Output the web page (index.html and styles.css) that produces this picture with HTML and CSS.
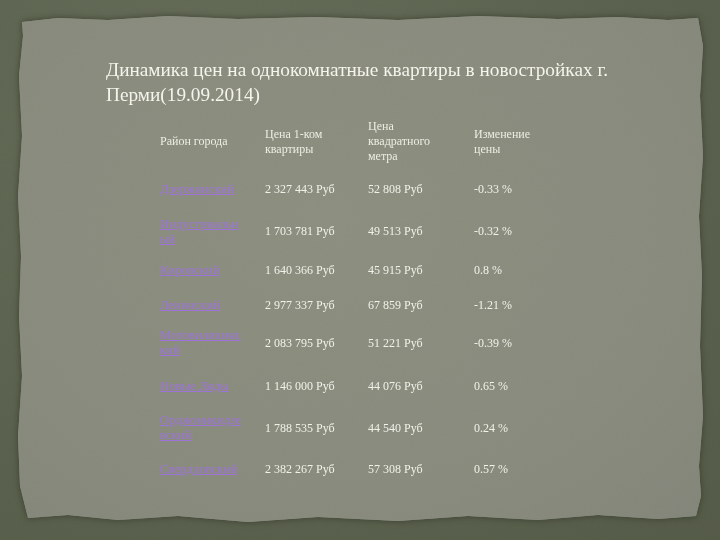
FILE: index.html
```html
<!DOCTYPE html>
<html lang="ru">
<head>
<meta charset="utf-8">
<title>Динамика цен</title>
<link rel="stylesheet" href="styles.css">
</head>
<body>
<div class="frame">
  <div class="paper">
    <h1 class="title">Динамика цен на однокомнатные квартиры в новостройках г.<br>Перми(19.09.2014)</h1>
    <table class="prices">
      <tr class="head">
        <td>Район города</td>
        <td>Цена 1-ком квартиры</td>
        <td>Цена квадратного метра</td>
        <td>Изменение цены</td>
      </tr>
      <tr class="r1">
        <td><a href="#">Дзержинский</a></td>
        <td>2 327 443 Руб</td>
        <td>52 808 Руб</td>
        <td>-0.33 %</td>
      </tr>
      <tr class="r2">
        <td><a href="#">Индустриальный</a></td>
        <td>1 703 781 Руб</td>
        <td>49 513 Руб</td>
        <td>-0.32 %</td>
      </tr>
      <tr class="r3">
        <td><a href="#">Кировский</a></td>
        <td>1 640 366 Руб</td>
        <td>45 915 Руб</td>
        <td>0.8 %</td>
      </tr>
      <tr class="r4">
        <td><a href="#">Ленинский</a></td>
        <td>2 977 337 Руб</td>
        <td>67 859 Руб</td>
        <td>-1.21 %</td>
      </tr>
      <tr class="r5">
        <td><a href="#">Мотовилихинский</a></td>
        <td>2 083 795 Руб</td>
        <td>51 221 Руб</td>
        <td>-0.39 %</td>
      </tr>
      <tr class="r6">
        <td><a href="#">Новые Ляды</a></td>
        <td>1 146 000 Руб</td>
        <td>44 076 Руб</td>
        <td>0.65 %</td>
      </tr>
      <tr class="r7">
        <td><a href="#">Орджоникидзевский</a></td>
        <td>1 788 535 Руб</td>
        <td>44 540 Руб</td>
        <td>0.24 %</td>
      </tr>
      <tr class="r8">
        <td><a href="#">Свердловский</a></td>
        <td>2 382 267 Руб</td>
        <td>57 308 Руб</td>
        <td>0.57 %</td>
      </tr>
    </table>
  </div>
</div>
<svg class="noise" width="720" height="540" aria-hidden="true">
  <filter id="grain">
    <feTurbulence type="fractalNoise" baseFrequency="0.9" numOctaves="2" seed="4"/>
    <feColorMatrix type="saturate" values="0"/>
  </filter>
  <rect width="720" height="540" filter="url(#grain)"/>
</svg>
</body>
</html>
```

FILE: styles.css
```css
html, body {
  margin: 0;
  padding: 0;
}
body {
  width: 720px;
  height: 540px;
  overflow: hidden;
  background: #5d6450;
  background-image: radial-gradient(ellipse at 30% 20%, #666d58 0%, #5b624e 60%, #555c48 100%);
  font-family: "Liberation Serif", "DejaVu Serif", serif;
  position: relative;
}
.frame {
  padding: 16px 17px 18px 18px;
  filter: drop-shadow(0 0 3px rgba(45, 50, 35, 0.7));
}
.paper {
  height: 506px;
  box-sizing: border-box;
  padding: 41px 0 0 88px;
  background: #8b8e7f;
  background-image: radial-gradient(ellipse at 45% 40%, #8e9182 0%, #8a8d7e 65%, #84877a 100%);
  clip-path: polygon(4px 6px, 40px 2px, 90px 4px, 150px 0px, 220px 3px, 300px 1px, 380px 4px, 460px 0px, 540px 3px, 600px 1px, 650px 4px, 680px 2px,
    685px 30px, 682px 80px, 685px 140px, 681px 200px, 684px 260px, 682px 330px, 685px 400px, 681px 450px, 683px 480px, 678px 500px,
    640px 503px, 580px 499px, 520px 504px, 450px 500px, 380px 505px, 300px 501px, 230px 506px, 160px 500px, 100px 504px, 50px 499px, 10px 502px,
    2px 470px, 0px 420px, 4px 360px, 1px 300px, 3px 240px, 0px 180px, 4px 120px, 1px 60px, 5px 20px);
}
.title {
  margin: 0;
  font-family: "Liberation Serif", serif;
  font-weight: normal;
  font-size: 19.3px;
  line-height: 25px;
  color: #f7f7ef;
  white-space: nowrap;
}
.prices {
  margin: 10px 0 0 54px;
  border-collapse: collapse;
  table-layout: fixed;
  color: #f4f4ec;
  font-size: 12px;
  line-height: 15px;
}
.prices td {
  padding: 0 18px 0 0;
  vertical-align: middle;
  overflow-wrap: anywhere;
}
.prices td:nth-child(1) { width: 86px; padding-right: 19px; }
.prices td:nth-child(2) { width: 85px; }
.prices td:nth-child(3) { width: 88px; }
.prices td:nth-child(4) { width: 80px; }
.prices .head td { font-size: 12px; color: #f0f0e6; }
.prices a {
  font-size: 12.8px;
  color: #9f74dc;
  text-decoration: underline;
}
.head { height: 49px; }
.r1 { height: 46px; }
.r2 { height: 39px; }
.r3 { height: 38px; }
.r4 { height: 33px; }
.r5 { height: 42px; }
.r6 { height: 44px; }
.r7 { height: 40px; }
.r8 { height: 42px; }
.noise {
  position: absolute;
  top: 0;
  left: 0;
  opacity: 0.07;
  pointer-events: none;
  mix-blend-mode: multiply;
}
```
